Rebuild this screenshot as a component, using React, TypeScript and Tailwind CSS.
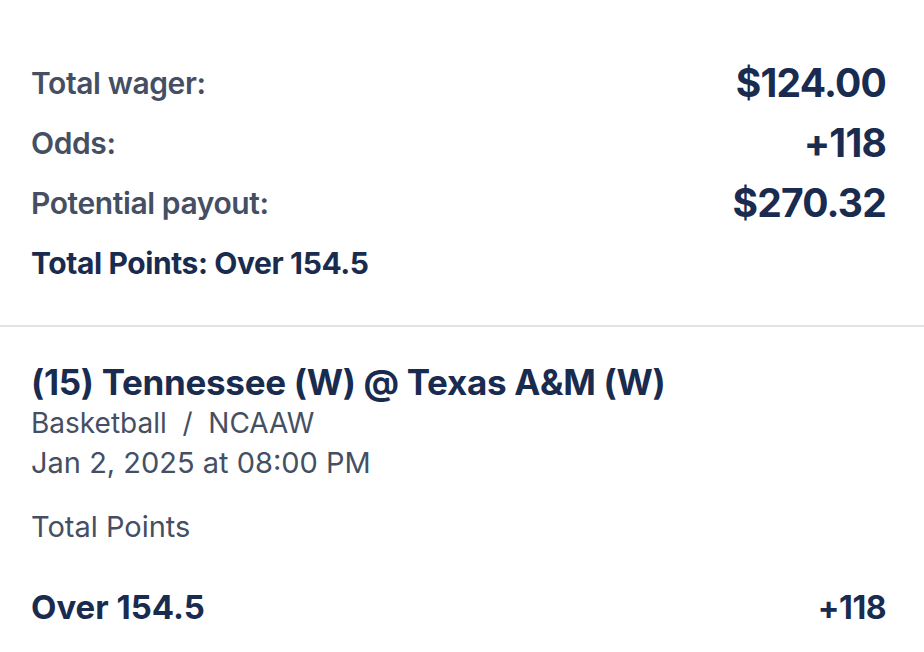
import React from 'react';

const summary = [
	{ label: 'Total wager:', value: '$124.00' },
	{ label: 'Odds:', value: '+118' },
	{ label: 'Potential payout:', value: '$270.32' },
];

const SummaryRow = ({ label, value }: { label: string; value: string }) => {
	return (
		<div className="flex flex-row justify-between items-center h-[60px]">
			<span className="text-[#454f63] text-[30px] font-semibold tracking-[-0.4px]">
				{label}
			</span>
			<span className="text-[#1a2b50] text-[39px] font-bold tracking-[-0.8px]">
				{value}
			</span>
		</div>
	);
};

export default function App() {
	return (
		<div className="w-[924px] h-[652px] bg-white overflow-hidden font-['Inter',sans-serif]">
			<div className="pl-[31px] pr-[38px] pt-[53px] pb-[32px]">
				{summary.map((row) => (
					<SummaryRow key={row.label} label={row.label} value={row.value} />
				))}
				<div className="flex items-center h-[60px] text-[#1a2b50] text-[30px] font-bold tracking-[-0.4px]">
					Total Points: Over 154.5
				</div>
			</div>
			<div className="h-[2px] bg-[#e3e3e3]" />
			<div className="pl-[31px] pr-[38px] pt-[34px]">
				<div className="text-[#1a2b50] text-[35px] font-bold tracking-[-0.3px] leading-[42px]">
					(15) Tennessee (W) @ Texas A&amp;M (W)
				</div>
				<div className="text-[#454f63] text-[28px] leading-[40px]">
					Basketball&nbsp; /&nbsp; NCAAW
				</div>
				<div className="text-[#454f63] text-[29px] leading-[40px]">
					Jan 2, 2025 at 08:00 PM
				</div>
				<div className="text-[#454f63] text-[29px] leading-[40px] mt-[24px]">
					Total Points
				</div>
				<div className="flex flex-row justify-between items-center h-[44px] mt-[39px]">
					<span className="text-[#1a2b50] text-[33px] font-bold">Over 154.5</span>
					<span className="text-[#1a2b50] text-[32px] font-bold tracking-[-0.5px]">+118</span>
				</div>
			</div>
		</div>
	);
}
